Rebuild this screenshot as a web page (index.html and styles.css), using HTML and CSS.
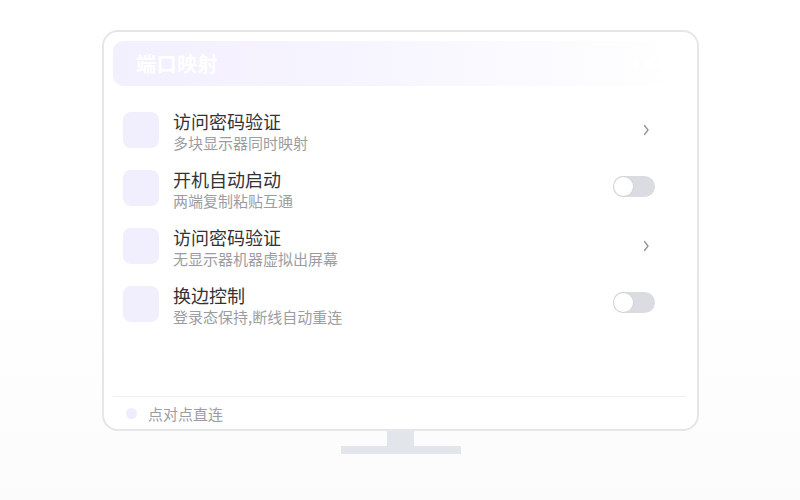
FILE: index.html
```html
<!DOCTYPE html>
<html lang="zh-CN">
<head>
<meta charset="utf-8">
<title>端口映射</title>
<link rel="stylesheet" href="styles.css">
</head>
<body>
<div class="stage">
  <div class="monitor">
    <div class="screen">
      <div class="header">
        <span class="header-title">端口映射</span>
        <span class="dots"><i></i><i></i><i></i></span>
      </div>
      <div class="list">
        <div class="row">
          <div class="icon"></div>
          <div class="text">
            <div class="title">访问密码验证</div>
            <div class="sub">多块显示器同时映射</div>
          </div>
          <div class="chev"><svg width="8" height="12" viewBox="0 0 8 12"><path d="M2.5 1.5 L6 6 L2.5 10.5" fill="none" stroke="#8d929b" stroke-width="1.3" stroke-linecap="round" stroke-linejoin="round"/></svg></div>
        </div>
        <div class="row">
          <div class="icon"></div>
          <div class="text">
            <div class="title">开机自动启动</div>
            <div class="sub">两端复制粘贴互通</div>
          </div>
          <div class="toggle"><span class="knob"></span></div>
        </div>
        <div class="row">
          <div class="icon"></div>
          <div class="text">
            <div class="title">访问密码验证</div>
            <div class="sub">无显示器机器虚拟出屏幕</div>
          </div>
          <div class="chev"><svg width="8" height="12" viewBox="0 0 8 12"><path d="M2.5 1.5 L6 6 L2.5 10.5" fill="none" stroke="#8d929b" stroke-width="1.3" stroke-linecap="round" stroke-linejoin="round"/></svg></div>
        </div>
        <div class="row">
          <div class="icon"></div>
          <div class="text">
            <div class="title">换边控制</div>
            <div class="sub">登录态保持,断线自动重连</div>
          </div>
          <div class="toggle"><span class="knob"></span></div>
        </div>
      </div>
      <div class="footer">
        <span class="fdot"></span>
        <span class="ftext">点对点直连</span>
      </div>
    </div>
    <div class="neck"></div>
    <div class="base"></div>
  </div>
</div>
</body>
</html>
```

FILE: styles.css
```css
* { box-sizing: border-box; }
html, body { margin: 0; padding: 0; }
body {
  width: 800px;
  height: 500px;
  background: linear-gradient(#ffffff 0%, #ffffff 55%, #fbfbfb 100%);
  font-family: "Noto Sans CJK SC", "Noto Sans", sans-serif;
  overflow: hidden;
}
.stage {
  display: flex;
  justify-content: center;
  padding-top: 30px;
  padding-left: 1px;
}
.monitor {
  display: flex;
  flex-direction: column;
  align-items: center;
}
.screen {
  width: 597px;
  height: 401px;
  border: 2px solid #e4e6ea;
  border-radius: 16px;
  background: #fff;
  display: flex;
  flex-direction: column;
  padding: 9px 10px 0 9px;
}
.header {
  height: 45px;
  border-radius: 10px;
  background: linear-gradient(90deg, #f3f0fe 0%, #f6f4fe 40%, #fbfbff 75%, #ffffff 100%);
  display: flex;
  align-items: center;
  justify-content: space-between;
  padding: 0 20px 0 23px;
}
.header-title {
  color: #ffffff;
  font-size: 20px;
  font-weight: 700;
  letter-spacing: 0.5px;
}
.dots { display: flex; gap: 6px; }
.dots i {
  display: block;
  width: 8px;
  height: 8px;
  border-radius: 50%;
  background: #ffffff;
}
.list {
  flex: 1;
  padding: 26px 32px 0 10px;
  display: flex;
  flex-direction: column;
}
.row {
  height: 58px;
  display: flex;
  align-items: flex-start;
}
.icon {
  width: 36px;
  height: 36px;
  border-radius: 8px;
  background: #f1eefd;
  flex: none;
}
.text {
  flex: 1;
  margin-left: 14px;
  margin-top: -2px;
}
.title {
  font-size: 18px;
  line-height: 23px;
  color: #333335;
}
.sub {
  font-size: 15px;
  line-height: 19px;
  color: #9b9da2;
}
.chev {
  width: 42px;
  display: flex;
  justify-content: flex-end;
  padding-right: 5px;
  padding-top: 12px;
}
.toggle {
  width: 42px;
  height: 21px;
  border-radius: 11px;
  background: #dadce1;
  margin-top: 6px;
  position: relative;
}
.knob {
  position: absolute;
  left: 1px;
  top: 1px;
  width: 19px;
  height: 19px;
  border-radius: 50%;
  background: #fff;
  box-shadow: 0 0 0 1px #d2d4d9;
}
.footer {
  border-top: 1px solid #eef0f3;
  height: 33px;
  display: flex;
  align-items: center;
  padding-left: 13px;
  margin-right: 1px;
}
.fdot {
  width: 11px;
  height: 11px;
  border-radius: 50%;
  background: #efecfd;
}
.ftext {
  margin-left: 11px;
  font-size: 15px;
  color: #9b9da2;
}
.neck {
  width: 27px;
  height: 15px;
  background: #e2e5e9;
}
.base {
  width: 120px;
  height: 8px;
  background: #e2e5e9;
}
```
